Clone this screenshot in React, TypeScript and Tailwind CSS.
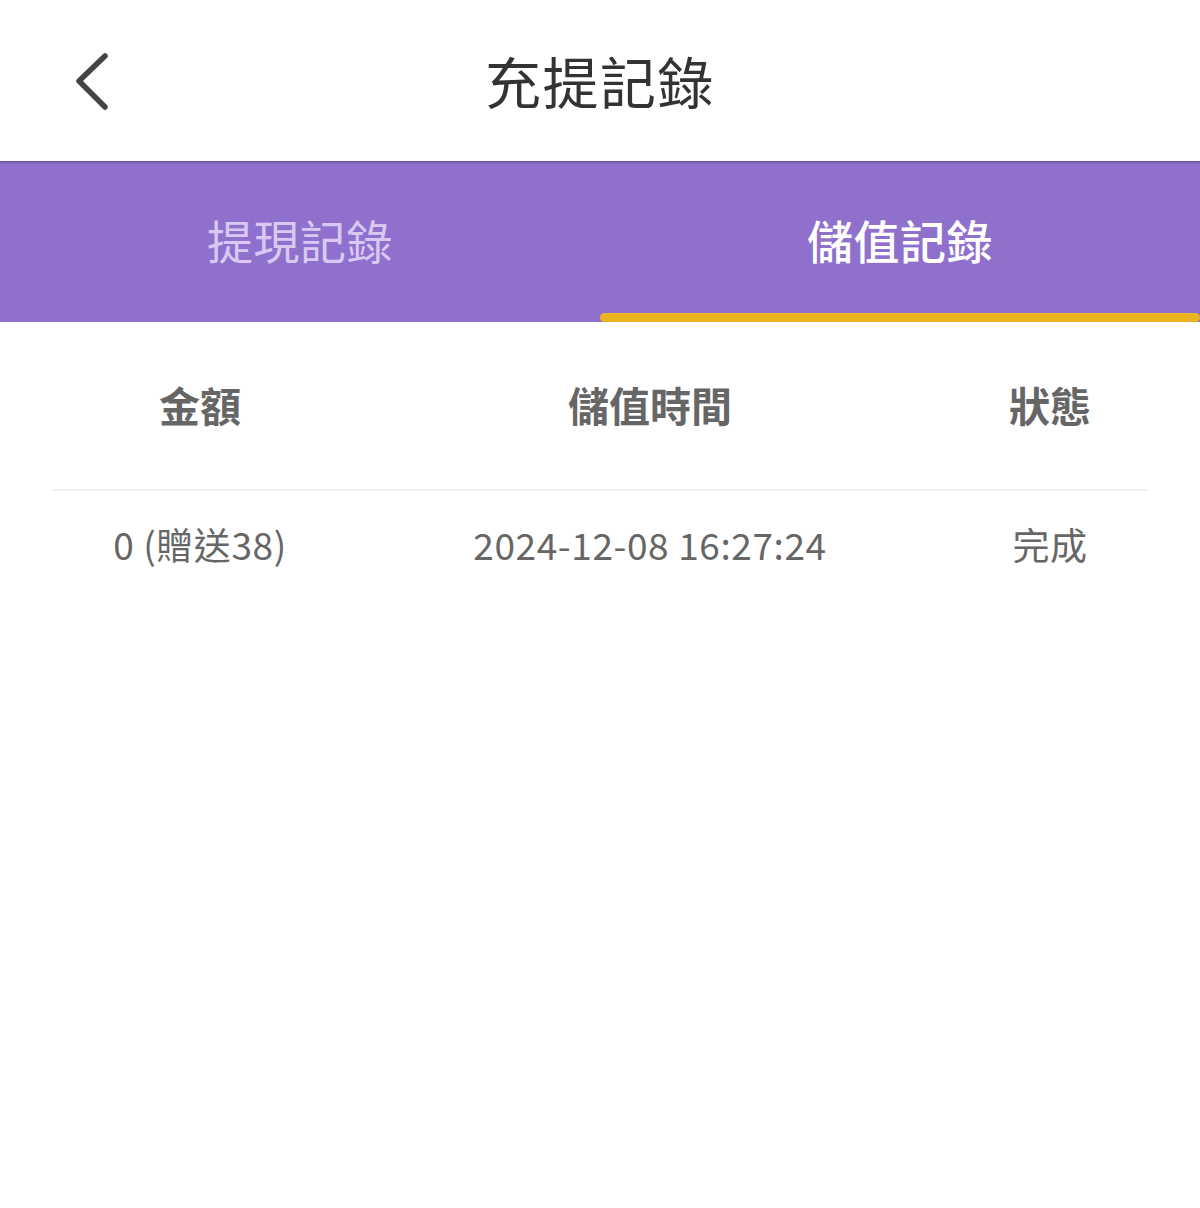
export default function App() {
  const font = { fontFamily: '"Noto Sans CJK TC", "Noto Sans", sans-serif' };

  return (
    <div className="min-h-[1208px] w-[1200px] bg-white" style={font}>
      <header className="relative flex h-[161px] items-center justify-center">
        <button className="absolute left-[62px] top-[42px] flex h-[80px] w-[60px] items-center justify-center">
          <svg width="40" height="62" viewBox="0 0 40 62" fill="none">
            <path d="M33 5 L7 30 L33 56" stroke="#444" strokeWidth="5.5" strokeLinecap="round" strokeLinejoin="round" />
          </svg>
        </button>
        <h1 className="pb-[2px] text-[56px] leading-none text-[#333] tracking-[1.5px]">充提記錄</h1>
      </header>

      <nav className="relative flex h-[161px] bg-[#8f70cd]">
        <span className="absolute left-0 right-0 top-0 h-[3px] bg-gradient-to-b from-[#6a5499] to-[#8f70cd]" />
        <div className="flex flex-1 items-center justify-center pb-[5px] text-[46px] tracking-[0.5px] text-[#d9c9f2]">提現記錄</div>
        <div className="relative flex flex-1 items-center justify-center pb-[5px] text-[46px] font-medium tracking-[0.5px] text-white">
          儲值記錄
          <span className="absolute bottom-0 left-0 right-0 h-[9px] rounded-full bg-[#ebb320]" />
        </div>
      </nav>

      <div className="mx-[53px]">
        <div className="grid h-[169px] grid-cols-[294px_606px_194px] items-center border-b-2 border-[#f0f0f0] pb-[2px] text-[41px] font-bold text-[#666]">
          <div className="text-center">金額</div>
          <div className="text-center">儲值時間</div>
          <div className="text-center">狀態</div>
        </div>
        <div className="grid h-[108px] grid-cols-[294px_606px_194px] items-center text-[37px] tracking-[0.6px] text-[#666]">
          <div className="text-center">0 (贈送38)</div>
          <div className="text-center">2024-12-08 16:27:24</div>
          <div className="text-center">完成</div>
        </div>
      </div>
    </div>
  );
}
